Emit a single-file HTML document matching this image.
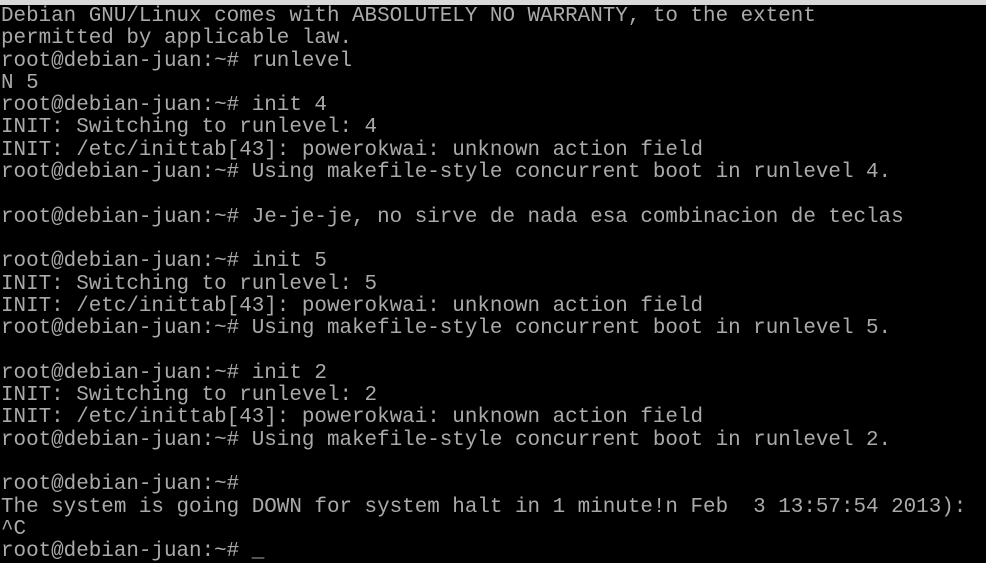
<!DOCTYPE html><html><head><style>
html,body{margin:0;padding:0;background:#000;width:986px;height:560px;overflow:hidden}
.bar{position:absolute;left:0;top:0;width:986px;height:5px;background:#d8d8d8}
pre{position:absolute;left:1px;top:6px;margin:0;font-family:"Liberation Mono",monospace;font-size:20.9px;line-height:22.3px;color:#aaaaaa}
</style></head><body><pre>Debian GNU/Linux comes with ABSOLUTELY NO WARRANTY, to the extent
permitted by applicable law.
root@debian-juan:~# runlevel
N 5
root@debian-juan:~# init 4
INIT: Switching to runlevel: 4
INIT: /etc/inittab[43]: powerokwai: unknown action field
root@debian-juan:~# Using makefile-style concurrent boot in runlevel 4.

root@debian-juan:~# Je-je-je, no sirve de nada esa combinacion de teclas

root@debian-juan:~# init 5
INIT: Switching to runlevel: 5
INIT: /etc/inittab[43]: powerokwai: unknown action field
root@debian-juan:~# Using makefile-style concurrent boot in runlevel 5.

root@debian-juan:~# init 2
INIT: Switching to runlevel: 2
INIT: /etc/inittab[43]: powerokwai: unknown action field
root@debian-juan:~# Using makefile-style concurrent boot in runlevel 2.

root@debian-juan:~#
The system is going DOWN for system halt in 1 minute!n Feb  3 13:57:54 2013):
^C
root@debian-juan:~# _</pre><div class="bar"></div></body></html>
